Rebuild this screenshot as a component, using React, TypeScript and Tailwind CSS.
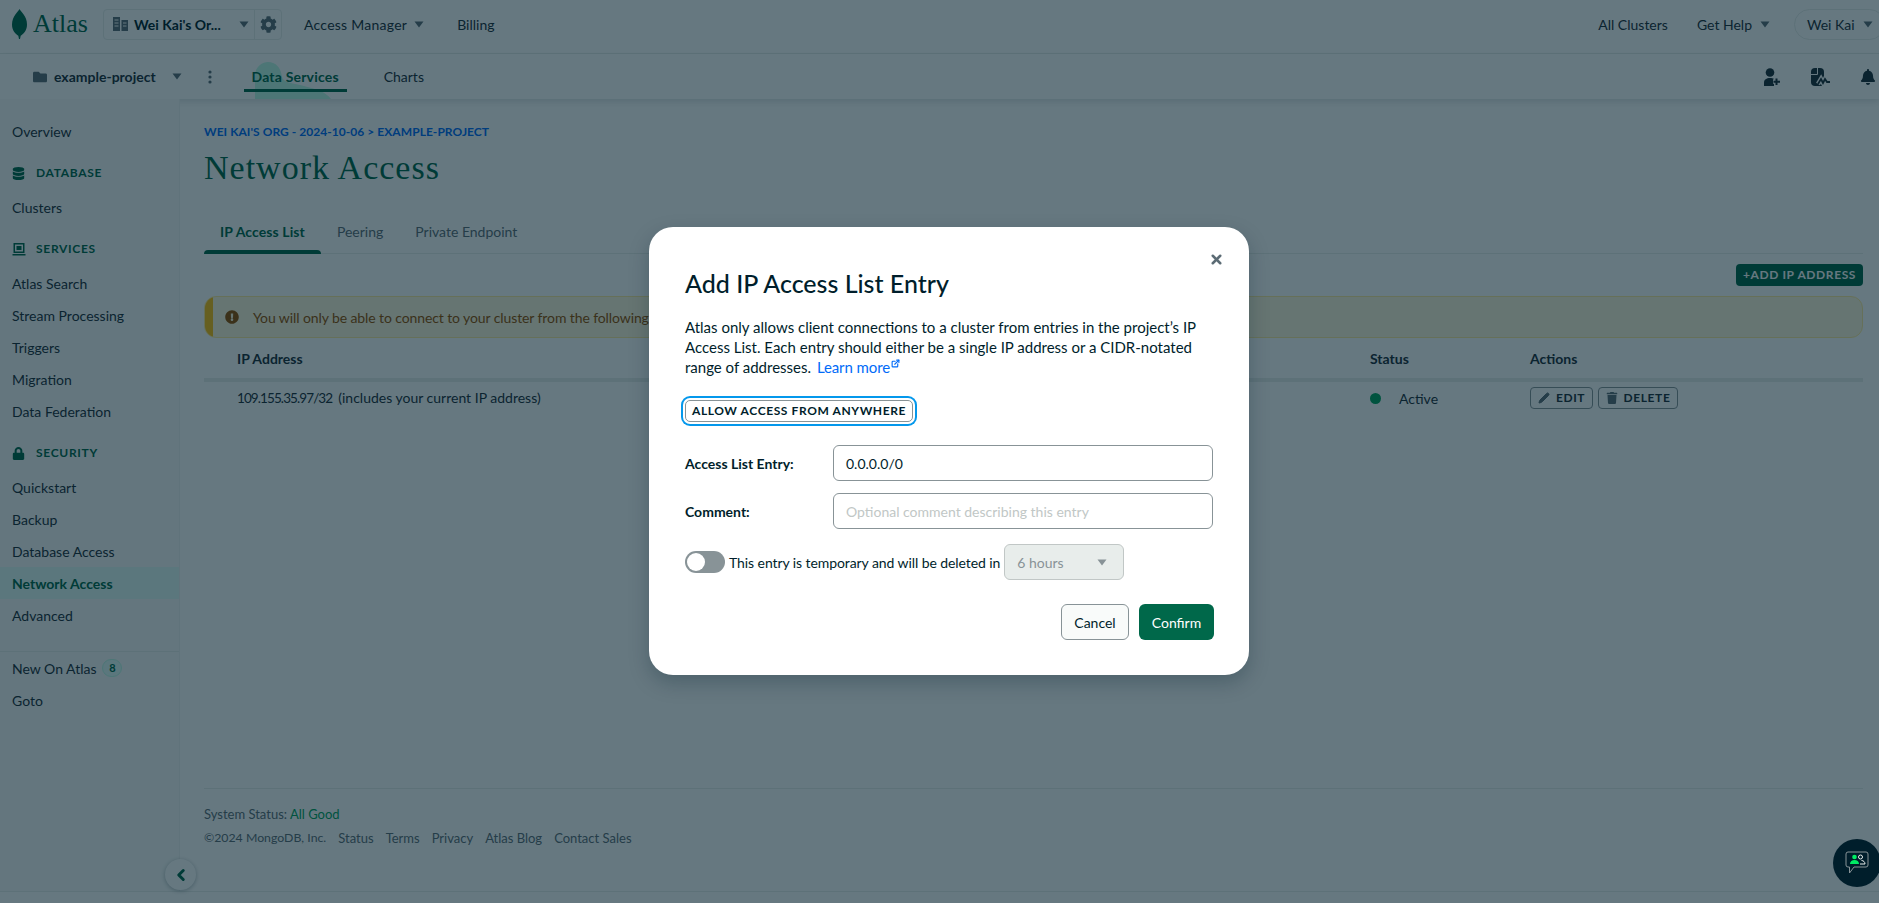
import { ReactNode } from 'react'
import { Pencil, X, ChevronLeft, ExternalLink } from 'lucide-react'
import { FaDatabase, FaLock, FaFolder, FaCog, FaBell, FaTrash, FaExclamationCircle } from 'react-icons/fa'

function Caret({ className = '' }: { className?: string }) {
  return (
    <svg width="10" height="7" viewBox="0 0 10 7" className={className}>
      <path d="M0.5 0.5h9L5 6.5z" fill="currentColor" />
    </svg>
  )
}

function NavItem({ label, active }: { label: string; active?: boolean }) {
  return (
    <div className={`h-8 flex items-center pl-3 text-[14px] ${active ? 'bg-[#E3FCF7] font-bold text-[#00684A]' : 'text-[#1C2D38]'}`}>
      {label}
    </div>
  )
}

function NavHeader({ icon, label }: { icon: ReactNode; label: string }) {
  return (
    <div className="h-5 mt-[16px] mb-[8px] pl-3 flex items-center text-[#00684A] text-[12px] font-bold tracking-[0.7px]">
      <span className="w-[24px] flex items-center">{icon}</span>
      {label}
    </div>
  )
}

function Sidebar() {
  return (
    <div className="w-[180px] shrink-0 pt-4 bg-[#F9FBFA] border-r border-[#F0F3F2] relative">
      <NavItem label="Overview" />
      <NavHeader icon={<FaDatabase size={13} />} label="DATABASE" />
      <NavItem label="Clusters" />
      <NavHeader
        icon={
          <svg width="14" height="14" viewBox="0 0 14 14">
            <path d="M1.5 1h11v10h-11z M3 2.5v7h8v-7z M4.5 4h5v4h-5z M0.5 12h13v1.5h-13z" fill="currentColor" fillRule="evenodd" />
          </svg>
        }
        label="SERVICES"
      />
      <NavItem label="Atlas Search" />
      <NavItem label="Stream Processing" />
      <NavItem label="Triggers" />
      <NavItem label="Migration" />
      <NavItem label="Data Federation" />
      <NavHeader icon={<FaLock size={13} />} label="SECURITY" />
      <NavItem label="Quickstart" />
      <NavItem label="Backup" />
      <NavItem label="Database Access" />
      <NavItem label="Network Access" active />
      <NavItem label="Advanced" />
      <div className="mt-5 border-t border-[#E8EDEB]" />
      <div className="h-8 flex items-center pl-3 text-[14px] text-[#1C2D38]">
        New On Atlas
        <span className="ml-[6px] w-[20px] h-[18px] rounded-full bg-[#E3FCF7] border border-[#C0FAE6] text-[#00684A] text-[11px] font-bold flex items-center justify-center">8</span>
      </div>
      <NavItem label="Goto" />
      <div className="absolute left-[165px] top-[760px] w-[31px] h-[31px] rounded-full bg-white shadow-[0_1px_4px_rgba(0,30,43,0.3)] flex items-center justify-center text-[#00684A]">
        <ChevronLeft size={18} strokeWidth={4} />
      </div>
    </div>
  )
}

function TopBar() {
  return (
    <div className="h-[54px] shrink-0 pb-[5px] border-b border-[#E8EDEB] bg-white flex items-center text-[14px] text-[#1C2D38] relative">
      <svg width="15" height="30" viewBox="0 0 15 30" className="ml-3">
        <path d="M7.5 0C8.5 2.5 15 7 15 15.5c0 6-3.5 9.5-6.3 11.2L8 30H7l-.7-3.3C3.5 25 0 21.5 0 15.5 0 7 6.5 2.5 7.5 0z" fill="#00684A" />
      </svg>
      <span className="ml-[6px] w-[70px] text-[26px] leading-none text-[#00684A] font-['Liberation_Serif',serif]">Atlas</span>
      <div className="w-[179px] h-[31px] rounded-[4px] border border-[#E8EDEB] flex items-center">
        <div className="w-[151px] h-full border-r border-[#E8EDEB] flex items-center pl-[9px]">
          <svg width="15" height="14" viewBox="0 0 15 14" className="text-[#5C6C75]">
            <path d="M0 0h7v14H0z M8.5 3H15v11H8.5z" fill="currentColor" />
            <path d="M1.5 3h4M1.5 6h4M1.5 9h4M10 6h3.5M10 9h3.5" stroke="#fff" strokeWidth="1" />
          </svg>
          <span className="ml-[6px] w-[89px] font-bold text-[#001E2B] whitespace-nowrap">Wei Kai's Or...</span>
          <Caret className="ml-4 text-[#5C6C75]" />
        </div>
        <div className="flex-1 flex items-center justify-center text-[#5C6C75]">
          <FaCog size={17} />
        </div>
      </div>
      <span className="ml-[22px] tracking-[0.25px]">Access Manager</span>
      <Caret className="ml-[7px] text-[#5C6C75]" />
      <span className="ml-[33px]">Billing</span>
      <span className="ml-auto">All Clusters</span>
      <span className="ml-[29px]">Get Help</span>
      <Caret className="ml-2 text-[#5C6C75]" />
      <div className="ml-6 w-[91px] -mr-[6px] h-[31px] rounded-full border border-[#E8EDEB] flex items-center pl-3">
        <span>Wei Kai</span>
        <Caret className="ml-2 text-[#5C6C75]" />
      </div>
    </div>
  )
}

function SubBar() {
  return (
    <div className="h-[45px] shrink-0 bg-white flex items-center text-[14px] text-[#1C2D38] relative shadow-[0_3px_6px_rgba(0,30,43,0.12)]">
      <FaFolder size={14} className="ml-[33px] text-[#5C6C75]" />
      <span className="ml-[7px] font-bold text-[#1C2D38]">example-project</span>
      <Caret className="ml-[16px] text-[#5C6C75]" />
      <svg width="4" height="14" viewBox="0 0 4 14" className="ml-[26px] text-[#5C6C75]">
        <circle cx="2" cy="2" r="1.6" fill="currentColor" />
        <circle cx="2" cy="7" r="1.6" fill="currentColor" />
        <circle cx="2" cy="12" r="1.6" fill="currentColor" />
      </svg>
      <div className="ml-[32px] w-[103px] h-full relative flex items-center justify-center font-bold text-[#00684A] tracking-[0.2px]">
        <svg width="76" height="37" viewBox="0 0 76 37" className="absolute left-[11px] top-[8px]">
          <path d="M0 37V14C0 4 8 0 13 0c7 0 13 5 14 15 1 6 12 6 22 9 12 3 22 6 27 13z" fill="#C0FAE6" />
        </svg>
        <span className="relative">Data Services</span>
        <div className="absolute left-0 right-0 top-[35px] h-[2.5px] bg-[#00684A]" />
      </div>
      <span className="ml-[37px]">Charts</span>
      <div className="ml-auto flex items-center text-[#1C2D38]">
        <svg width="17" height="18" viewBox="0 0 17 18" className="mr-[30px]">
          <circle cx="6" cy="4.5" r="4.3" fill="currentColor" />
          <path d="M0 18v-3.5C0 11.5 2.5 10 6 10c1.5 0 3 .3 4 1v7z" fill="currentColor" />
          <path d="M12.5 10v7M9 13.5h7" stroke="#fff" strokeWidth="4.5" />
          <path d="M12.5 10.5v6.5M9.5 13.75h6.5" stroke="currentColor" strokeWidth="2" />
        </svg>
        <svg width="19" height="18" viewBox="0 0 19 18" className="mr-[30px]">
          <path d="M4 0h5a4 4 0 0 1 4 4v14H4a4 4 0 0 1-4-4V4a4 4 0 0 1 4-4z" fill="currentColor" />
          <path d="M6.5 0v6.5H0" stroke="#fff" strokeWidth="1" fill="none" />
          <path d="M7 16l3-5 2 4 2-4 2 3h3" stroke="#fff" strokeWidth="4.5" fill="none" />
          <path d="M7 16l3-5 2 4 2-4 2 3h3" stroke="currentColor" strokeWidth="1.8" fill="none" />
        </svg>
        <FaBell size={16} className="mr-[3px]" />
      </div>
    </div>
  )
}

function Content() {
  return (
    <div className="flex-1 flex flex-col pl-6 pr-4 bg-white min-w-0">
      <div className="mt-[26px] text-[12px] leading-[14px] font-bold text-[#016BF8] tracking-[0.05px]">WEI KAI'S ORG - 2024-10-06 &gt; EXAMPLE-PROJECT</div>
      <h1 className="mt-[9px] text-[34px] leading-[40px] text-[#00684A] font-['Liberation_Serif',serif] tracking-[1px]">Network Access</h1>
      <div className="mt-[25px] h-[41px] flex border-b border-[#E8EDEB] text-[14px]">
        <div className="relative px-4 pb-[3px] h-full flex items-center font-bold text-[#00684A] tracking-[0.1px]">
          IP Access List
          <div className="absolute left-0 right-0 -bottom-px h-1 rounded-t-[4px] bg-[#00684A]" />
        </div>
        <div className="px-4 pb-[3px] h-full flex items-center text-[#5C6C75]">Peering</div>
        <div className="px-4 pb-[3px] h-full flex items-center text-[#5C6C75]">Private Endpoint</div>
      </div>
      <div className="mt-[10px] flex justify-end">
        <div className="w-[127px] h-[22px] rounded-[4px] bg-[#00684A] text-white text-[12px] font-bold tracking-[0.6px] flex items-center justify-center">+ADD IP ADDRESS</div>
      </div>
      <div className="mt-[10px] h-[42px] rounded-[12px] border border-[#FFEC9E] bg-[#FEF7DB] flex items-center overflow-hidden text-[14px] text-[#944F01] tracking-[-0.1px]">
        <div className="w-[8px] h-full bg-[#FFC010] shrink-0" />
        <FaExclamationCircle size={14} className="ml-[12px] text-[#944F01]" />
        <span className="ml-[14px]">You will only be able to connect to your cluster from the following</span>
      </div>
      <div className="h-[44px] flex items-center border-b-4 border-[#E8EDEB] text-[14px] font-bold text-[#1C2D38]">
        <span className="ml-[33px] w-[1133px]">IP Address</span>
        <span className="w-[160px]">Status</span>
        <span>Actions</span>
      </div>
      <div className="h-[32px] flex items-center text-[14px] text-[#1C2D38]">
        <span className="ml-[33px] w-[1133px]">
          <span className="text-[13.5px] tracking-[-0.9px]">109.155.35.97/32</span>
          <span className="ml-[6px]">(includes your current IP address)</span>
        </span>
        <span className="w-[160px] flex items-center">
          <span className="w-[11px] h-[11px] rounded-full bg-[#00A35C]" />
          <span className="ml-[18px]">Active</span>
        </span>
        <div className="flex gap-[5px] text-[12px] font-bold tracking-[0.6px]">
          <div className="w-[63px] h-[22px] rounded-[4px] border border-[#889397] flex items-center justify-center gap-[6px]">
            <Pencil size={12} className="text-[#5C6C75] fill-[#5C6C75]" />
            EDIT
          </div>
          <div className="w-[80px] h-[22px] rounded-[4px] border border-[#889397] flex items-center justify-center gap-[6px]">
            <FaTrash size={12} className="text-[#5C6C75]" />
            DELETE
          </div>
        </div>
      </div>
      <div className="mt-auto border-t border-[#E8EDEB] pt-4 h-[103px] text-[13px] text-[#5C6C75]">
        <div className="leading-[18px]">System Status: <span className="text-[#00A35C]">All Good</span></div>
        <div className="mt-[6px] leading-[18px] flex items-center gap-3">
          <span className="text-[12.3px]">©2024 MongoDB, Inc.</span>
          <span>Status</span>
          <span>Terms</span>
          <span>Privacy</span>
          <span>Atlas Blog</span>
          <span>Contact Sales</span>
        </div>
      </div>
    </div>
  )
}

function Modal() {
  return (
    <div className="w-[600px] h-[448px] rounded-[24px] bg-white relative pt-10 pl-9 text-[14px] text-[#001E2B] shadow-[0_8px_20px_rgba(0,30,43,0.25)]">
      <X size={15} strokeWidth={4} className="absolute left-[560px] top-[25px] text-[#5C6C75]" />
      <h2 className="text-[25px] leading-[32px] font-medium">Add IP Access List Entry</h2>
      <p className="mt-[18px] w-[524px] text-[15px] leading-[20px]">
        Atlas only allows client connections to a cluster from entries in the project’s IP Access List. Each entry should either be a single IP address or a CIDR-notated range of addresses.{' '}
        <a className="text-[#016BF8] ml-[2px] tracking-[-0.1px]">Learn more</a>
        <ExternalLink size={9} strokeWidth={3} className="inline-block text-[#016BF8] ml-[1px] align-top mt-[2px]" />
      </p>
      <button className="mt-[23px] w-[228px] h-[22px] rounded-[5px] bg-white border border-[#889397] text-[12px] font-bold tracking-[0.6px] flex items-center justify-center shadow-[0_0_0_2px_#fff,0_0_0_4px_#0498EC]">
        ALLOW ACCESS FROM ANYWHERE
      </button>
      <div className="mt-[23px] flex items-center">
        <label className="w-[148px] font-bold">Access List Entry:</label>
        <div className="w-[380px] h-9 rounded-[6px] border border-[#889397] flex items-center pl-3">0.0.0.0/0</div>
      </div>
      <div className="mt-3 flex items-center">
        <label className="w-[148px] font-bold">Comment:</label>
        <div className="w-[380px] h-9 rounded-[6px] border border-[#889397] flex items-center pl-3 text-[#C1C7C6]">Optional comment describing this entry</div>
      </div>
      <div className="mt-[15px] flex items-center">
        <div className="w-10 h-[22px] rounded-full bg-[#889397] flex items-center pl-[2px]">
          <div className="w-[18px] h-[18px] rounded-full bg-white" />
        </div>
        <span className="ml-1 tracking-[-0.08px]">This entry is temporary and will be deleted in</span>
        <div className="ml-1 w-[120px] h-9 rounded-[6px] border border-[#C1C7C6] bg-[#E8EDEB] flex items-center pl-[12px] text-[#889397]">
          6 hours
          <Caret className="ml-auto mr-[16px] text-[#889397]" />
        </div>
      </div>
      <div className="mt-6 w-[529px] flex justify-end gap-[10px]">
        <button className="w-[68px] h-9 rounded-[6px] border border-[#889397] bg-[#F9FBFA] flex items-center justify-center">Cancel</button>
        <button className="w-[75px] h-9 rounded-[6px] bg-[#00684A] text-white flex items-center justify-center">Confirm</button>
      </div>
    </div>
  )
}

export default function App() {
  return (
    <div className="h-screen w-full overflow-hidden relative bg-white flex flex-col font-[Lato,'Noto_Sans',sans-serif]">
      <TopBar />
      <SubBar />
      <div className="h-[793px] flex border-b border-[#E8EDEB]">
        <Sidebar />
        <Content />
      </div>
      <div className="absolute inset-0 z-10 bg-[rgba(0,30,43,0.6)] flex justify-center items-start pt-[227px] pl-[19px]">
        <Modal />
      </div>
      <div className="absolute z-20 left-[1833px] top-[839px] w-12 h-12 rounded-full bg-[#001E2B] flex items-center justify-center">
        <svg width="24" height="24" viewBox="0 0 24 24">
          <path d="M3 1h18a2 2 0 0 1 2 2v11a2 2 0 0 1-2 2H9l-4.5 6v-6H3a2 2 0 0 1-2-2V3a2 2 0 0 1 2-2z" fill="none" stroke="#889397" strokeWidth="1" />
          <circle cx="9.5" cy="6" r="2.3" fill="#00ED64" />
          <path d="M5 13c0-2.5 2-4 4.500-4s4.500 1.500 4.500 4z" fill="#00ED64" />
          <circle cx="15.500" cy="6" r="2" fill="none" stroke="#E8EDEB" />
          <path d="M15 13h5c0-2-1.500-3.500-3.500-3.500" fill="none" stroke="#E8EDEB" />
        </svg>
      </div>
    </div>
  )
}
